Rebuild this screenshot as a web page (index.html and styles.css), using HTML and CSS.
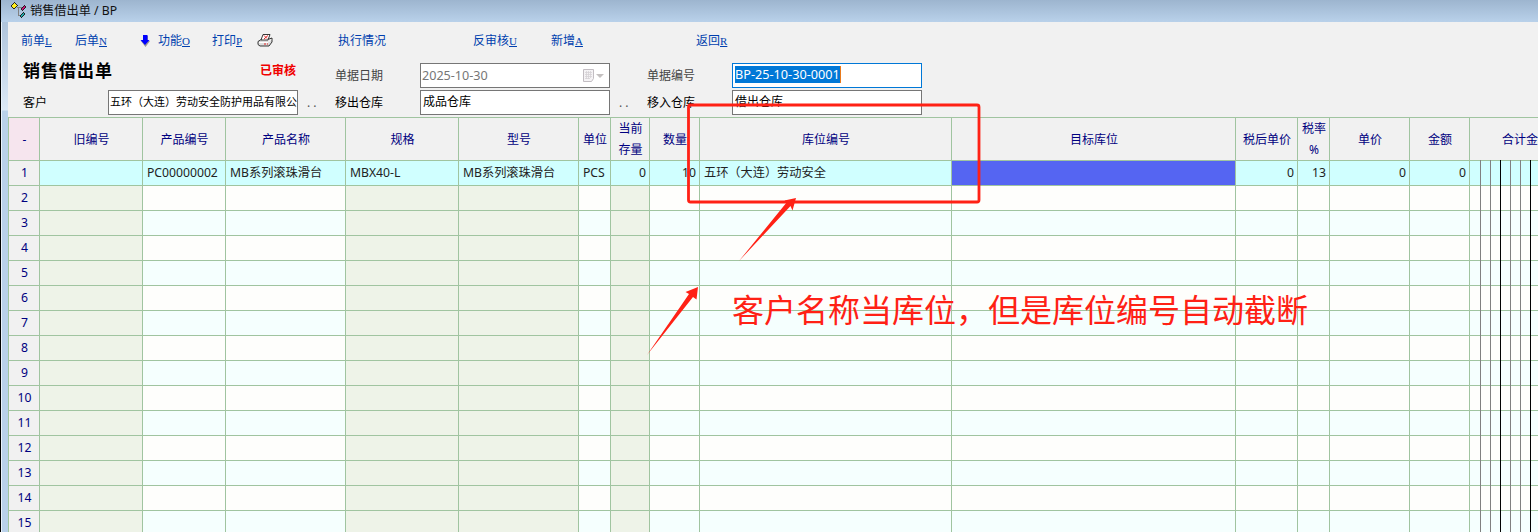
FILE: index.html
```html
<!DOCTYPE html>
<html lang="zh-CN">
<head>
<meta charset="utf-8">
<title>销售借出单 / BP</title>
<link rel="stylesheet" href="styles.css">
</head>
<body>
<div class="window">
  <header class="titlebar">
    <svg class="app-icon" width="17" height="17" viewBox="0 0 17 17" shape-rendering="crispEdges">
      <path d="M7 5h5M8 5v8h3" fill="none" stroke="#808080"/>
      <path d="M0 4L4 0L8 3L4 7Z" fill="#222"/><path d="M1 4L4 1L7 3L4 6Z" fill="#ffee20"/>
      <path d="M10 7L14 3L16 5L12 9Z" fill="#222"/><path d="M11 7L14 4L15 5L12 8Z" fill="#d0107a"/>
      <path d="M9 14L13 10L15 12L11 16Z" fill="#222"/><path d="M10 14L13 11L14 12L11 15Z" fill="#18b0b0"/>
    </svg>
    <span class="title">销售借出单 / BP</span>
  </header>
  <main class="body">
    <nav class="toolbar">
      <a class="tool t-prev">前单<u>L</u></a>
      <a class="tool t-next">后单<u>N</u></a>
      <svg class="down" width="10" height="12" viewBox="0 0 10 12"><path d="M3 1h5v5h2L5.500 12L1 6h2Z" fill="#999"/><path d="M3 0h4.500v5h2L5 10L.5 5H3Z" fill="#00f"/></svg>
      <a class="tool t-func">功能<u>O</u></a>
      <a class="tool t-print">打印<u>P</u></a>
      <svg class="printer" width="16" height="13" viewBox="0 0 16 13"><path d="M1 7.500L5 5H12L15 4V8L12 12H3L1 10.500Z" fill="#ddd" stroke="#222" stroke-width=".9"/><path d="M4 6L6 .5H13L11 6Z" fill="#fff" stroke="#222" stroke-width=".9"/><path d="M2 8.500h9l3-3" fill="none" stroke="#fff"/><path d="M7 1.500l3 3M11 1.500L7 5M7 10h2M10 10h1" stroke="#e02020"/></svg>
      <a class="tool t-run">执行情况</a>
      <a class="tool t-undo">反审核<u>U</u></a>
      <a class="tool t-new">新增<u>A</u></a>
      <a class="tool t-back">返回<u>R</u></a>
    </nav>
    <section class="form">
      <div class="heading"><h1>销售借出单</h1><strong>已审核</strong></div>
      <label class="dim">单据日期</label>
      <div class="field date"><span>2025-10-30</span>
        <svg width="21" height="14" viewBox="0 0 21 14"><path d="M.5.5h10v9l-2 3h-8Z" fill="#f5f3f5" stroke="#c2bdc2"/><path d="M2 3.500h7M2 5.500h7M2 7.500h7M2 9.500h5M3.500 2v8M5.500 2v8M7.500 2v7" stroke="#d6d2d6" stroke-width=".8"/><path d="M13 5h8l-4 4Z" fill="#c4c0c0"/></svg>
      </div>
      <span></span>
      <label class="dim">单据编号</label>
      <div class="field focus"><span class="selected">BP-25-10-30-0001</span></div>
      <label>客户</label>
      <div class="field customer"><span>五环（大连）劳动安全防护用品有限公</span></div>
      <span class="dots">. .</span>
      <label>移出仓库</label>
      <div class="field">成品仓库</div>
      <span class="dots">. .</span>
      <label>移入仓库</label>
      <div class="field">借出仓库</div>
    </section>
    <section class="sheet">
      <table class="grid">
        <colgroup><col class="w31"><col class="w103"><col class="w83"><col class="w120"><col class="w113"><col class="w120"><col class="w32"><col class="w39"><col class="w50"><col class="w252"><col class="w284"><col class="w62"><col class="w32"><col class="w80"><col class="w60"><col class="w110"></colgroup>
        <thead><tr><th class="corner">-</th><th>旧编号</th><th>产品编号</th><th>产品名称</th><th>规格</th><th>型号</th><th>单位</th><th>当前<br>存量</th><th>数量</th><th>库位编号</th><th>目标库位</th><th>税后单价</th><th>税率<br>%</th><th>单价</th><th>金额</th><th class="total">合计金</th></tr></thead>
        <tbody id="rows"></tbody>
      </table>
      <div class="rules"></div>
    </section>
  </main>
  <svg class="marks" width="1538" height="532" viewBox="0 0 1538 532">
    <rect x="688.500" y="105" width="290.500" height="97" rx="2" fill="none" stroke="#ff2115" stroke-width="2.800"/>
    <path d="M739 261L787 202L784.500 200.500L796 198L792.500 210.500L790.500 206Z" fill="#ff2115"/>
    <path d="M647 355L689 294L685.500 292L698 287L696.500 299.500L693 297Z" fill="#ff2115"/>
  </svg>
  <div class="note">客户名称当库位，但是库位编号自动截断</div>
</div>
<script src="grid.js"></script>
</body>
</html>
```

FILE: styles.css
```css
* { box-sizing: border-box; }
body { margin: 0; overflow: hidden; background: #f1f1f1; font: 12px/16px "Noto Sans", "Noto Sans CJK SC", sans-serif; }
.window { position: relative; width: 1538px; height: 532px; overflow: hidden; background: linear-gradient(#a4bbd5, #dce9f6 110px, #b9d1ea 111px); border-left: 1px solid #000; box-shadow: inset 1px 0 #e8f2fc; }
.titlebar { display: flex; height: 22px; padding: 2px 0 0 9px; background: linear-gradient(#9db5cf, #b9d1ea); gap: 3px; }
.app-icon { flex: none; }
.title { font-size: 12.200px; line-height: 17px; color: #111; white-space: nowrap; }
.body { margin-left: 7px; height: 510px; background: #f1f1f1; }
.toolbar { display: flex; align-items: flex-start; height: 40px; padding: 10px 0 0 13px; }
.tool { font: 12px/17px "Liberation Serif", "Noto Sans CJK SC", serif; color: #003fae; white-space: nowrap; flex: none; height: 17px; padding-top: 1px; }
.tool u { font-family: "Liberation Serif", serif; font-size: 11px; }
.t-prev { width: 54px; }
.t-next { width: 64px; }
.down { margin: 3px 8px 0 1px; flex: none; }
.t-func { width: 54px; }
.t-print { width: 45px; }
.printer { margin-top: 2px; flex: none; }
.t-run { margin-left: 65px; width: 135px; }
.t-undo { width: 78px; }
.t-new { width: 145px; }
.form { display: grid; grid-template-columns: 85px 190px 37px 85px 190px 37px 85px 190px; grid-template-rows: 25px 25px; row-gap: 2px; height: 55px; padding: 1px 0 0 15px; }
.heading { grid-column: 1 / 4; display: flex; justify-content: space-between; }
.heading h1 { margin: -2px 0 0; font-size: 17px; line-height: 19px; letter-spacing: 1px; }
.heading strong { margin-right: 39px; color: #f00000; line-height: 15px; }
.form label { line-height: 25px; color: #000; }
.form .dim { color: #444; }
.field { border: 1px solid #767676; background: #fff; padding: 0 2px; line-height: 21px; overflow: hidden; white-space: nowrap; }
.customer { padding-left: 1px; }
.customer span { font-size: 11px; }
.date { display: flex; justify-content: space-between; align-items: center; padding: 0 5px 0 1px; color: #767676; font-size: 12.600px; }
.focus { border-color: #0078d7; }
.selected { display: inline-block; background: #0078d7; color: #fff; height: 17px; line-height: 16px; margin-top: 2px; border-right: 1px solid #e87a1c; font-size: 12.700px; }
.dots { padding-left: 9px; line-height: 25px; color: #555; }
.sheet { position: relative; height: 415px; width: 1530px; overflow: hidden; border-top: 1px solid #a0c4a0; border-left: 1px solid #a0c4a0; }
.grid { table-layout: fixed; width: 1571px; border-collapse: separate; border-spacing: 0; }
.w31 { width: 31px; } .w103 { width: 103px; } .w83 { width: 83px; } .w120 { width: 120px; }
.w113 { width: 113px; } .w32 { width: 32px; } .w39 { width: 39px; } .w50 { width: 50px; }
.w252 { width: 252px; } .w284 { width: 284px; } .w62 { width: 62px; } .w80 { width: 80px; }
.w60 { width: 60px; } .w110 { width: 110px; }
.grid th, .grid td { padding: 0; border-right: 1px solid #a0c4a0; border-bottom: 1px solid #a0c4a0; font-weight: 400; overflow: hidden; white-space: nowrap; }
.grid th { height: 43px; background: #f1f1f1; color: #000080; line-height: 21px; padding-left: 1px; }
.grid .corner { background: #f6e5ee; }
.grid .total { text-align: left; padding-left: 32px; }
.grid td { height: 25px; line-height: 23px; padding: 0 3px 1px 4px; background: #fff; color: #222; font-size: 12.200px; }
.grid tr.even td { background: #fefefc; }
.grid tr.odd td { background: #f5fffe; }
.grid tr td.locked { background: #eef3e8; }
.grid tr.current td { background: #d0ffff; }
.grid tr.current td.target { background: #5565f2; }
.grid tr td.index { background: #f1f1f1; color: #000080; text-align: center; padding: 0 0 1px 1px; }
.grid td.num { text-align: right; }
.rules { position: absolute; left: 1471px; top: 42px; bottom: 0; width: 58px; background: linear-gradient(90deg, #808080 1px, transparent 1px 10px, #808080 10px 11px, transparent 11px 20px, #000 20px 21px, transparent 21px) 0 0 / 30px 100%; }
.marks { position: absolute; left: -1px; top: 0; pointer-events: none; }
.note { position: absolute; left: 731px; top: 288px; font-size: 32px; line-height: 40px; color: #ff2115; white-space: nowrap; font-family: "Noto Sans CJK SC", sans-serif; font-weight: 400; }
```

FILE: grid.js
```js
const first = ['', 'PC00000002', 'MB系列滚珠滑台', 'MBX40-L', 'MB系列滚珠滑台', 'PCS', '0', '10', '五环（大连）劳动安全', '', '0', '13', '0', '0', ''];
const locked = new Set([0, 3, 4, 6]);
const numeric = new Set([6, 7, 10, 11, 12, 13]);
const body = document.getElementById('rows');
for (let n = 1; n <= 15; n++) {
  const row = body.insertRow();
  row.className = n === 1 ? 'current' : n % 2 ? 'odd' : 'even';
  const index = row.insertCell();
  index.className = 'index';
  index.textContent = n;
  first.forEach((value, i) => {
    const cell = row.insertCell();
    if (locked.has(i)) cell.classList.add('locked');
    if (numeric.has(i)) cell.classList.add('num');
    if (i === 9) cell.classList.add('target');
    if (n === 1) cell.textContent = value;
  });
}
```
